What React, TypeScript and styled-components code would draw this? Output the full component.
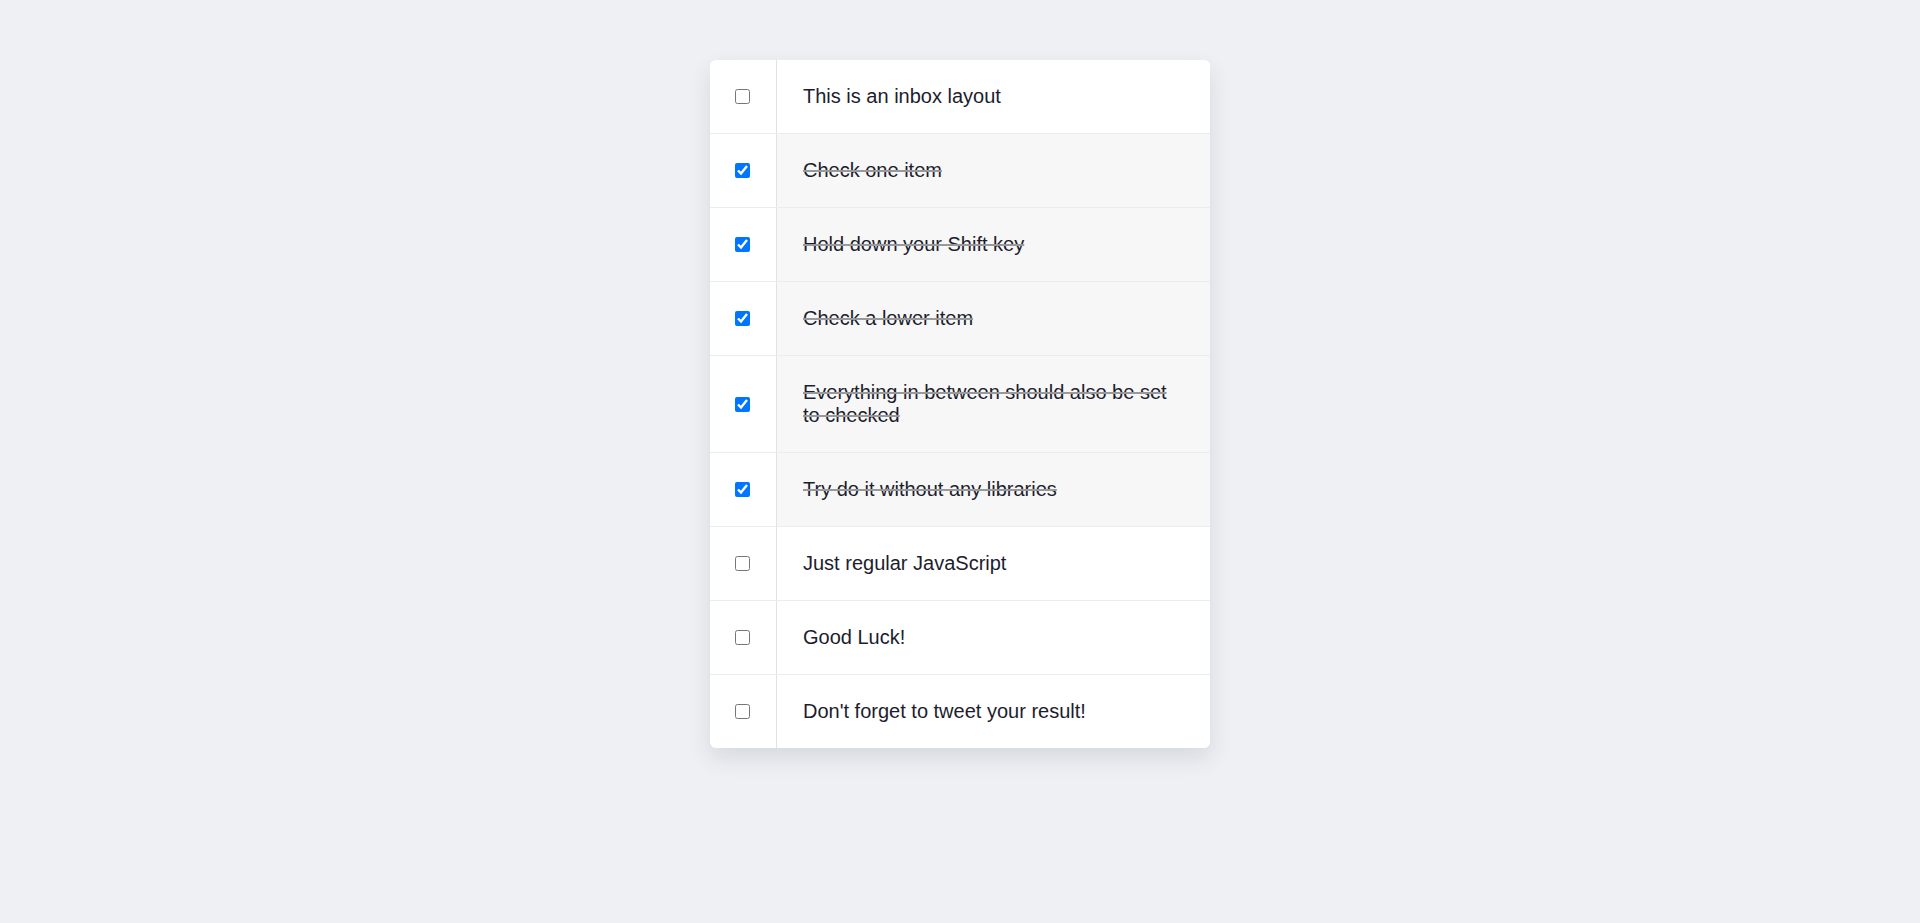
import React, { useState } from "react";
import styled, { createGlobalStyle } from "styled-components";

const items = [
  "This is an inbox layout",
  "Check one item",
  "Hold down your Shift key",
  "Check a lower item",
  "Everything in between should also be set to checked",
  "Try do it without any libraries",
  "Just regular JavaScript",
  "Good Luck!",
  "Don't forget to tweet your result!",
];

function App() {
  const [checked, setChecked] = useState<boolean[]>([
    false,
    true,
    true,
    true,
    true,
    true,
    false,
    false,
    false,
  ]);

  const toggle = (index: number) => {
    setChecked((prev) => prev.map((c, i) => (i === index ? !c : c)));
  };

  return (
    <Page>
      <GlobalStyle />
      <Inbox>
        {items.map((text, index) => (
          <Item key={text}>
            <CheckCell>
              <input
                type="checkbox"
                checked={checked[index]}
                onChange={() => toggle(index)}
              />
            </CheckCell>
            <Text $done={checked[index]}>{text}</Text>
          </Item>
        ))}
      </Inbox>
    </Page>
  );
}

const GlobalStyle = createGlobalStyle`
  body {
    margin: 0;
    background: #eff0f3;
    font-family: "Liberation Sans", Arial, sans-serif;
  }
`;

const Page = styled.div`
  min-height: 100vh;
  box-sizing: border-box;
  padding: 60px 0;
  background: #eff0f3;
`;

const Inbox = styled.div`
  width: 500px;
  margin: 0 auto;
  background: #ffffff;
  border-radius: 6px;
  box-shadow: 0 10px 22px rgba(40, 50, 90, 0.12);
  overflow: hidden;
`;

const Item = styled.label`
  display: flex;
  align-items: stretch;
  border-bottom: 1px solid #ececec;
  &:last-child {
    border-bottom: 0;
  }
`;

const CheckCell = styled.div`
  width: 66px;
  flex-shrink: 0;
  display: flex;
  align-items: center;
  justify-content: center;
  border-right: 1px solid #e2e2e2;
  input {
    margin: 0 1px 0 0;
    width: 15px;
    height: 15px;
  }
`;

const Text = styled.p<{ $done: boolean }>`
  flex: 1;
  margin: 0;
  padding: 25px 26px;
  font-size: 20px;
  line-height: 23px;
  color: #1c1d2e;
  background: ${(props) => (props.$done ? "#f7f7f7" : "#ffffff")};
  text-decoration: ${(props) => (props.$done ? "line-through" : "none")};
  text-decoration-color: #999999;
  text-decoration-thickness: 2px;
`;

export default App;
